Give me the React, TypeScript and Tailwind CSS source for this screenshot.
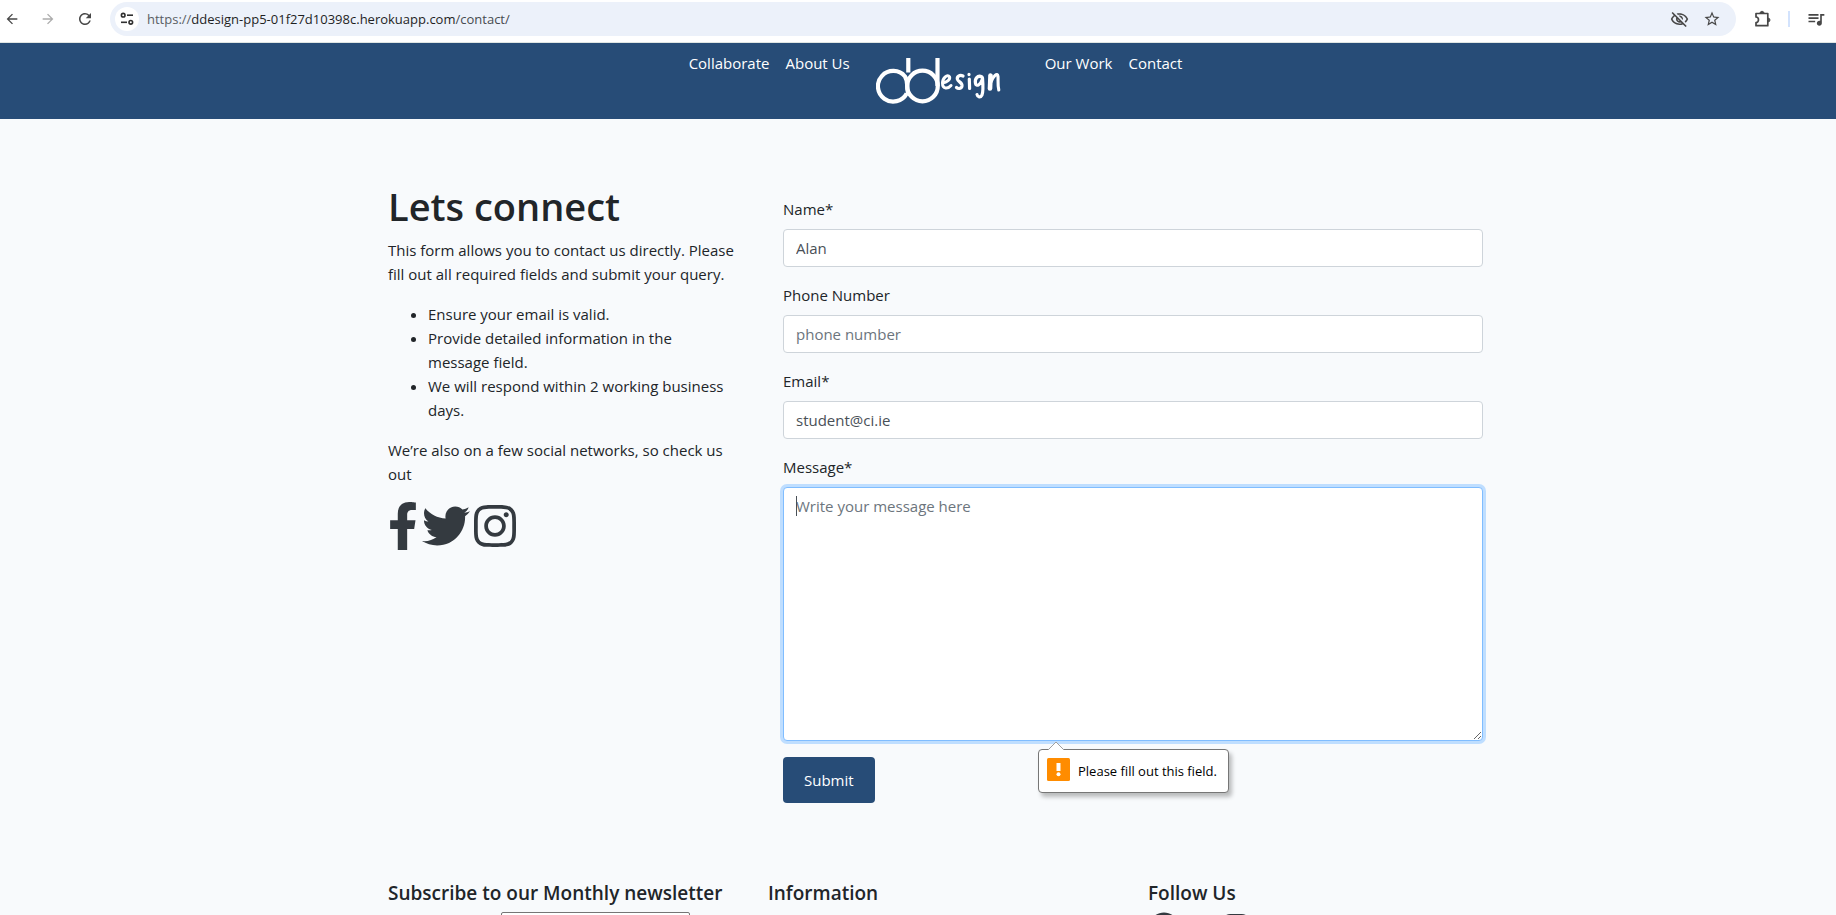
import type { ReactNode } from "react";
import { FaFacebook, FaFacebookF, FaInstagram, FaTwitter } from "react-icons/fa";
import {
  MdArrowBack,
  MdArrowForward,
  MdOutlineQueueMusic,
  MdOutlineVisibilityOff,
  MdRefresh,
  MdStarOutline,
} from "react-icons/md";

function TuneIcon() {
  return (
    <svg viewBox="0 0 16 16" className="h-4 w-4" fill="none" stroke="currentColor" strokeWidth="1.6" aria-hidden="true">
      <circle cx="4.2" cy="4.2" r="1.8" />
      <path d="M8 4.2h6" />
      <circle cx="11.8" cy="11.3" r="1.8" />
      <path d="M2 11.3h6" />
    </svg>
  );
}

function PuzzleIcon() {
  return (
    <svg viewBox="0 0 18 18" className="h-[18px] w-[18px]" fill="none" stroke="currentColor" strokeWidth="1.7" strokeLinejoin="round" aria-hidden="true">
      <path d="M2 3.500H13.800V15.700H2V12.500C5.300 12.500 5.300 7 2 7Z" />
      <path d="M6 3C6 .8 10 .8 10 3ZM14.300 8C16.500 8 16.500 12 14.300 12Z" fill="currentColor" strokeWidth="0.800" />
    </svg>
  );
}

function ToolButton({ label, className = "", children }: { label: string; className?: string; children: ReactNode }) {
  return (
    <button type="button" aria-label={label} className={`flex items-center justify-center text-[#474747] ${className}`}>
      {children}
    </button>
  );
}

function BrowserBar() {
  return (
    <div className="flex h-[43px] shrink-0 items-start border-b border-[#dfe5e3] bg-white pt-[2px]">
      <div className="flex h-[34px] items-center gap-5 pl-[4px]">
        <ToolButton label="Back"><MdArrowBack size={16} /></ToolButton>
        <ToolButton label="Forward" className="opacity-45"><MdArrowForward size={16} /></ToolButton>
        <ToolButton label="Reload"><MdRefresh size={18} /></ToolButton>
      </div>
      <div className="ml-4 flex h-[34px] flex-1 items-center rounded-full bg-[#ecf1fa] pl-[5px] pr-[15px]">
        <button type="button" aria-label="Site information" className="flex h-6 w-6 items-center justify-center rounded-full bg-white text-[#303030]">
          <TuneIcon />
        </button>
        <span className="ml-2 flex-1 text-[13px] text-[#1f1f1f]">
          <span className="text-[#5a5e64]">https://</span>ddesign-pp5-01f27d10398c.herokuapp.com<span className="text-[#474b50]">/contact/</span>
        </span>
        <div className="flex items-center gap-[14px]">
          <ToolButton label="Tracking protection"><MdOutlineVisibilityOff size={19} /></ToolButton>
          <ToolButton label="Bookmark"><MdStarOutline size={18} /></ToolButton>
        </div>
      </div>
      <div className="flex h-[34px] items-center pl-[18px] pr-[10px]">
        <ToolButton label="Extensions"><PuzzleIcon /></ToolButton>
        <span className="mx-4 h-4 w-[2px] bg-[#d3e3fd]" />
        <ToolButton label="Media controls"><MdOutlineQueueMusic size={20} /></ToolButton>
      </div>
    </div>
  );
}

function Logo() {
  return (
    <svg viewBox="0 0 126 50" className="h-[50px] w-[126px]" fill="none" stroke="#fff" strokeLinecap="round" strokeLinejoin="round" role="img" aria-label="ddesign">
      <g strokeWidth="4.2" strokeLinecap="butt">
        <circle cx="46.5" cy="30" r="15.3" />
        <path d="M30.700 37.500A15.300 15.300 0 1 1 29 20.500C31.300 24 31.200 27 31.200 30C31.200 33.500 31.200 36 33 38.500" />
        <path d="M32.300 2V16.500M61.500 2V30" />
      </g>
      <path d="M66.500 27C71 26.500 74.500 23.500 73.500 20.800C71.500 17.500 66.500 22 66.500 27C66.500 33.500 72 33 75 29.500" strokeWidth="3" />
      <path d="M87 20C83.500 18.500 80.500 20.500 81.500 23.500C82.500 26 86.500 26.500 86 30C85.500 33 82 33 80.500 31.500" strokeWidth="3.200" />
      <path d="M93.300 23L93.600 32.500M93 18.300V18.600" strokeWidth="3.200" />
      <path d="M106 21C101.500 18.500 98.500 23 99.500 27.500C100.500 31 104.500 29 106 24M106.500 22C107 28 107.500 35 106 39C104.500 42 101.500 41 101 38.500" strokeWidth="3.200" />
      <path d="M114.500 19.500L114 32.500" strokeWidth="4.600" />
      <path d="M115 26C117 20.500 121.500 15.500 122 20.500C122.300 25 121.500 29 122.800 34" strokeWidth="3.100" />
    </svg>
  );
}

function NavBar() {
  return (
    <nav className="flex h-[76px] shrink-0 items-start justify-center bg-[#274c77] pr-[15px] pl-[50px] text-[15px] leading-6 text-white">
      <div className="flex gap-4 pt-2">
        <a href="#collaborate">Collaborate</a>
        <a href="#about">About Us</a>
      </div>
      <a href="#home" className="mr-[43px] ml-[26px] pt-[13px]"><Logo /></a>
      <div className="flex gap-4 pt-2">
        <a href="#work">Our Work</a>
        <a href="#contact">Contact</a>
      </div>
    </nav>
  );
}

function Intro() {
  return (
    <section>
      <h1 className="mb-2 text-[38px] leading-[48px] font-semibold">Lets connect</h1>
      <p className="mb-4">This form allows you to contact us directly. Please fill out all required fields and submit your query.</p>
      <ul className="mb-4 list-disc pr-2 pl-10">
        <li>Ensure your email is valid.</li>
        <li>Provide detailed information in the message field.</li>
        <li>We will respond within 2 working business days.</li>
      </ul>
      <p className="mb-4">We’re also on a few social networks, so check us out</p>
      <div className="flex gap-1 text-[#343a40]">
        <a href="#facebook" aria-label="Facebook"><FaFacebookF className="h-12 w-[30px]" /></a>
        <a href="#twitter" aria-label="Twitter"><FaTwitter size={48} /></a>
        <a href="#instagram" aria-label="Instagram"><FaInstagram className="h-12 w-[42px]" /></a>
      </div>
    </section>
  );
}

const fieldClass =
  "block w-full rounded border border-[#ced4da] bg-white px-3 text-[#495057] placeholder:text-[#6c757d] focus:outline-none";

function Field({ id, label, type, value, placeholder }: { id: string; label: string; type: string; value?: string; placeholder?: string }) {
  return (
    <div className="mb-4">
      <label htmlFor={id} className="mb-2 block">{label}</label>
      <input id={id} type={type} defaultValue={value} placeholder={placeholder} className={`h-[38px] ${fieldClass}`} />
    </div>
  );
}

function ValidationBubble() {
  return (
    <div role="alert" className="absolute top-full left-[255px] mt-2 flex h-11 w-[191px] items-start rounded border border-[#767676] bg-white pt-2 pl-2 text-[13px] text-black shadow-[3px_4px_4px_rgba(0,0,0,0.25)]">
      <svg viewBox="0 0 18 9" className="absolute -top-[9px] left-[8px] h-[9px] w-[18px]" aria-hidden="true">
        <path d="M1 9L9 1l8 8" fill="#fff" stroke="#a0a0a0" />
      </svg>
      <svg viewBox="0 0 23 23" className="h-[23px] w-[23px]" aria-hidden="true">
        <rect width="23" height="23" rx="1.500" fill="#ff8c00" />
        <path d="M9.500 5h4v8h-4z" fill="#fff" />
        <circle cx="11.500" cy="16.200" r="2" fill="#fff" />
      </svg>
      <span className="ml-2 leading-[26px] whitespace-nowrap">Please fill out this field.</span>
    </div>
  );
}

function ContactForm() {
  return (
    <form className="pt-[15px]" noValidate>
      <Field id="name" label="Name*" type="text" value="Alan" />
      <Field id="phone" label="Phone Number" type="tel" placeholder="phone number" />
      <Field id="email" label="Email*" type="email" value="student@ci.ie" />
      <label htmlFor="message" className="mb-2 block">Message*</label>
      <div className="relative mb-4">
        <textarea
          id="message"
          placeholder="Write your message here"
          className="block h-[254px] w-full resize-y rounded border border-[#80bdff] bg-white px-3 py-[6px] text-[#495057] shadow-[0_0_0_3px_#bfdeff] placeholder:text-[#6c757d] focus:outline-none"
        />
        <span className="absolute top-[9px] left-[13px] h-5 w-px bg-[#495057]" />
        <ValidationBubble />
      </div>
      <button type="submit" className="h-[46px] rounded bg-[#274c77] px-[21px] text-white">Submit</button>
    </form>
  );
}

function Footer() {
  return (
    <footer className="mx-auto grid w-full max-w-[1140px] grid-cols-3 pt-[78px] text-[19px] leading-6">
      <section className="px-[15px]">
        <h2 className="mb-[7px] font-semibold whitespace-nowrap">Subscribe to our Monthly newsletter</h2>
        <input type="email" aria-label="Newsletter email" className="ml-[113px] h-[30px] w-[189px] rounded-[2px] border border-[#767676] bg-white px-1 text-[15px]" />
      </section>
      <section className="px-[15px]">
        <h2 className="font-semibold">Information</h2>
      </section>
      <section className="px-[15px]">
        <h2 className="mb-[7px] font-semibold">Follow Us</h2>
        <div className="flex gap-10 text-[#343a40]">
          <a href="#follow-facebook" aria-label="Follow on Facebook"><FaFacebook size={32} /></a>
          <a href="#follow-instagram" aria-label="Follow on Instagram"><FaInstagram size={32} /></a>
        </div>
      </section>
    </footer>
  );
}

export default function App() {
  return (
    <div className="flex h-screen flex-col overflow-hidden bg-[#f8fafc] font-['Open_Sans','Noto_Sans',sans-serif] text-[15px] leading-6 text-[#212529]">
      <BrowserBar />
      <NavBar />
      <div className="min-h-0 flex-1 overflow-hidden pl-[50px]">
        <main className="mx-auto grid w-full max-w-[1140px] grid-cols-3 pt-[63px]">
          <div className="px-[15px]"><Intro /></div>
          <div className="col-span-2 pr-[30px] pl-[30px]"><ContactForm /></div>
        </main>
        <Footer />
      </div>
    </div>
  );
}
